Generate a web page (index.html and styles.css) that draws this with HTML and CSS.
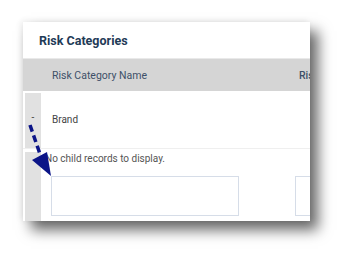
FILE: index.html
```html
<!DOCTYPE html>
<html lang="en">
<head>
    <meta charset="UTF-8">
    <title>Risk Categories</title>
    <link rel="stylesheet" href="styles.css">
</head>
<body>
    <div class="card">
        <h2 class="title">Risk Categories</h2>
        <div class="thead">
            <div class="th">Risk Category Name</div>
            <div class="th th-next">Risk Category Owner</div>
        </div>
        <div class="row parent">
            <div class="strip">-</div>
            <div class="cell">Brand</div>
        </div>
        <div class="row child">
            <div class="strip"></div>
            <div class="child-body">
                <p class="empty">No child records to display.</p>
                <div class="boxes">
                    <div class="box"></div>
                    <div class="box"></div>
                </div>
            </div>
        </div>
    </div>
    <svg class="arrow" width="352" height="263" viewBox="0 0 352 263">
        <line x1="30" y1="125" x2="41" y2="157" stroke="#0b1487" stroke-width="3.5" stroke-dasharray="7 4"/>
        <polygon points="32,160 47,152 51,176" fill="#0b1487"/>
    </svg>
</body>
</html>
```
FILE: styles.css
```css
*{
    margin:0;
    padding:0;
    box-sizing:border-box;
}
body{
    background:#fff;
    font-family:Roboto, "Liberation Sans", sans-serif;
    width:352px;
    height:263px;
    overflow:hidden;
    position:relative;
}
.card{
    margin:22px 0 0 23px;
    width:287px;
    height:199px;
    background:#fff;
    overflow:hidden;
    box-shadow:8px 9px 13px rgba(0,0,0,0.6), -2px -1px 6px rgba(0,0,0,0.08);
}
.title{
    height:36px;
    line-height:38px;
    padding-left:16px;
    font-size:12.5px;
    font-weight:700;
    color:#1f3b57;
}
.thead{
    display:flex;
    height:33px;
    background:#d5d5d5;
    border-top:1px solid #e9e9e9;
    align-items:center;
    padding-left:29px;
    white-space:nowrap;
}
.th{
    width:247px;
    flex:none;
    font-size:10.5px;
    color:#3d5068;
}
.th-next{
    font-weight:500;
}
.row{
    display:flex;
    padding-left:2px;
}
.strip{
    width:16px;
    flex:none;
    background:#e1e1e1;
    font-size:10px;
    color:#444;
    text-align:center;
    padding-top:19px;
}
.parent{
    margin-top:2px;
    height:55px;
}
.cell{
    padding:21px 0 0 11px;
    font-size:10px;
    color:#444;
}
.child{
    border-top:1px solid #efefef;
    padding-top:3px;
    height:74px;
}
.child-body{
    padding:1px 0 0 4px;
    flex:1;
}
.empty{
    font-size:10px;
    color:#555;
    height:23px;
}
.boxes{
    display:flex;
    gap:56px;
    padding-left:6px;
}
.box{
    width:188px;
    height:40px;
    flex:none;
    border:1px solid #d6dde8;
}
.arrow{
    position:absolute;
    left:0;
    top:0;
}
```
